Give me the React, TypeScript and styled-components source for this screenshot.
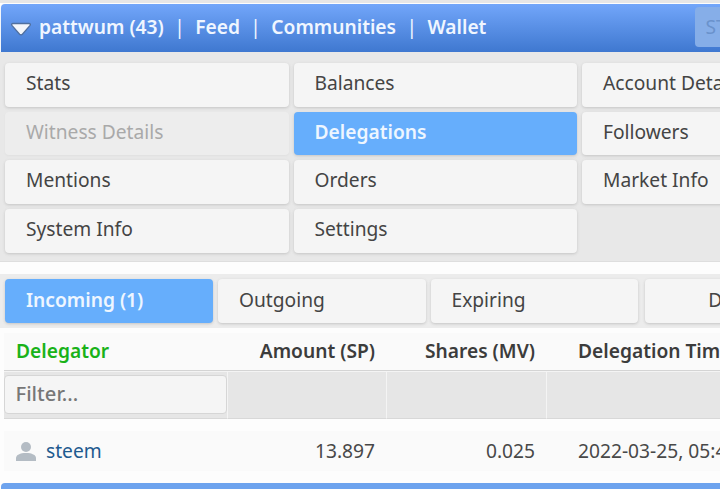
import React from "react";
import styled, { createGlobalStyle } from "styled-components";

const Global = createGlobalStyle`
  html, body { margin: 0; padding: 0; background: #fdfdfd; overflow: hidden; }
  body { font-family: "Noto Sans", "Open Sans", sans-serif; font-size: 19.2px; width: 720px; height: 489px; }
  #root { width: 720px; height: 489px; overflow: hidden; }
`;

const Page = styled.div`
  width: 720px;
  height: 489px;
  overflow: hidden;
  padding-top: 4px;
  box-sizing: border-box;
  background: linear-gradient(#e6e6e6, #e6e6e6) no-repeat 0 0 / 100% 3px, #fdfdfd;
`;

const Header = styled.header`
  height: 48px;
  margin-left: 1px;
  width: 760px;
  border-radius: 4px 4px 0 0;
  background: linear-gradient(#72a6fa, #3f78d0);
  display: flex;
  align-items: center;
  box-sizing: border-box;
  padding: 0 0 3px 9px;
  color: #f0f6ff;
  font-weight: 600;
  font-size: 19.2px;
  white-space: nowrap;
  box-shadow: 0 1px 1px #9db8de;
`;

const Caret = styled.svg`
  width: 22px;
  height: 16px;
  margin: 4px 7px 0 0;
  flex: none;
`;

const Sep = styled.span`
  font-weight: 400;
  margin: 0 10.4px;
`;

const SearchBox = styled.div`
  margin-left: 209px;
  width: 80px;
  height: 40px;
  border-radius: 4px;
  background: #86aee8;
  color: #6a92cc;
  font-weight: 400;
  font-size: 19.2px;
  padding-left: 10px;
  box-sizing: border-box;
  line-height: 40px;
`;

const MenuPanel = styled.nav`
  width: 880px;
  background: #e8e8e8;
  padding: 11px 5px 8px;
  display: grid;
  grid-template-columns: repeat(3, 283.5px);
  grid-auto-rows: 43.7px;
  column-gap: 5px;
  row-gap: 5px;
  box-sizing: border-box;
  border-bottom: 1px solid #dedede;
`;

const Btn = styled.div<{ $active?: boolean; $disabled?: boolean; $center?: boolean }>`
  border-radius: 4px;
  display: flex;
  align-items: center;
  justify-content: ${(p) => (p.$center ? "center" : "flex-start")};
  padding: 0 0 5px 21px;
  box-sizing: border-box;
  white-space: nowrap;
  font-size: 19.2px;
  font-weight: ${(p) => (p.$active ? 600 : 400)};
  color: ${(p) => (p.$active ? "#eef6ff" : p.$disabled ? "#a9a9a9" : "#444")};
  background: ${(p) => (p.$active ? "#66aefc" : p.$disabled ? "#ededed" : "#f5f5f5")};
  box-shadow: ${(p) => (p.$disabled ? "0 1px 2px #e0e0e0" : "0 1px 3px #c4c4c4")};
`;

const Tab = styled(Btn)`
  padding-bottom: 3px;
  &:last-child { margin: 0 2px; }
`;

const TabsPanel = styled.div`
  margin-top: 12px;
  width: 880px;
  background: #ececec;
  padding: 5px;
  display: grid;
  grid-template-columns: 208px 207.5px 207.5px 208px;
  grid-auto-rows: 44px;
  column-gap: 5px;
  box-sizing: border-box;
`;

const Table = styled.table`
  margin: 5px 0 0 4px;
  width: 880px;
  table-layout: fixed;
  border-collapse: separate;
  border-spacing: 0;
  font-size: 19.2px;
  color: #444;
`;

const Th = styled.th<{ $sorted?: boolean; $left?: boolean; $indent?: boolean }>`
  height: 38px;
  padding: 0 12px 1px ${(p) => (p.$indent ? "31px" : "12px")};
  box-sizing: border-box;
  font-weight: 600;
  font-size: 19.2px;
  white-space: nowrap;
  overflow: hidden;
  text-align: ${(p) => (p.$left ? "left" : "right")};
  color: ${(p) => (p.$sorted ? "#19b219" : "#3c3c3c")};
  background: #fafafa;
  border-bottom: 1px solid #d4d4d4;
`;

const FilterCell = styled.td`
  height: 48px;
  padding: 3px 0 4px 0;
  box-sizing: border-box;
  background: #e6e6e6;
  border-top: 1px solid #f4f4f4;
  border-right: 1px solid #f4f4f4;
  border-bottom: 1px solid #d8d8d8;
`;

const FilterInput = styled.input`
  display: block;
  width: 100%;
  height: 39px;
  box-sizing: border-box;
  border: 1px solid #d6d6d6;
  border-radius: 4px;
  background: #f5f5f5;
  padding: 0 11px 2px 10.5px;
  font: 500 20.2px "Noto Sans", sans-serif;
  color: #777;
  &::placeholder { color: #777; opacity: 1; }
`;

const Spacer = styled.td`
  height: 12px;
  padding: 0;
`;

const Td = styled.td<{ $left?: boolean; $indent?: boolean }>`
  height: 40px;
  padding: 0 12px 0 ${(p) => (p.$indent ? "31px" : "12px")};
  background: #fafafa;
  white-space: nowrap;
  overflow: hidden;
  text-align: ${(p) => (p.$left ? "left" : "right")};
  color: #484848;
`;

const UserCell = styled.div`
  display: flex;
  align-items: center;
  gap: 10px;
`;

const UserLink = styled.a`
  color: #1f5a8f;
`;

const BottomBar = styled.div`
  margin-top: 12px;
  height: 6px;
  width: 760px;
  margin-left: 1px;
  border-radius: 4px 4px 0 0;
  background: #6da3ee;
`;

export default function App() {
  return (
    <Page>
      <Global />
      <Header>
        <Caret viewBox="0 0 22 16">
          <path d="M3 2.5h16c1.2 0 1.8 1 1.1 1.9L12.4 13.2c-.7.8-2 .8-2.8 0L1.9 4.4C1.2 3.5 1.8 2.5 3 2.5z" fill="#f3f6fb" stroke="#4f6f9f" strokeWidth="1.3" />
        </Caret>
        <span>pattwum (43)</span>
        <Sep>|</Sep>
        <span>Feed</span>
        <Sep>|</Sep>
        <span>Communities</span>
        <Sep>|</Sep>
        <span>Wallet</span>
        <SearchBox>ST</SearchBox>
      </Header>
      <MenuPanel>
        <Btn>Stats</Btn>
        <Btn>Balances</Btn>
        <Btn>Account Details</Btn>
        <Btn $disabled>Witness Details</Btn>
        <Btn $active>Delegations</Btn>
        <Btn>Followers</Btn>
        <Btn>Mentions</Btn>
        <Btn>Orders</Btn>
        <Btn>Market Info</Btn>
        <Btn>System Info</Btn>
        <Btn>Settings</Btn>
      </MenuPanel>
      <TabsPanel>
        <Tab $active>Incoming (1)</Tab>
        <Tab>Outgoing</Tab>
        <Tab>Expiring</Tab>
        <Tab $center>Delegation</Tab>
      </TabsPanel>
      <Table>
        <colgroup>
          <col style={{ width: 224 }} />
          <col style={{ width: 159 }} />
          <col style={{ width: 160 }} />
          <col style={{ width: 337 }} />
        </colgroup>
        <thead>
          <tr>
            <Th $sorted $left>Delegator</Th>
            <Th>Amount (SP)</Th>
            <Th>Shares (MV)</Th>
            <Th $left $indent>Delegation Time</Th>
          </tr>
          <tr>
            <FilterCell><FilterInput placeholder="Filter..." readOnly /></FilterCell>
            <FilterCell />
            <FilterCell />
            <FilterCell />
          </tr>
        </thead>
        <tbody>
          <tr><Spacer colSpan={4} /></tr>
          <tr>
            <Td $left>
              <UserCell>
                <svg width="20" height="20" viewBox="0 0 20 20">
                  <circle cx="10" cy="6" r="5" fill="#b4bcc4" />
                  <path d="M0 20v-3c0-3 4-5 10-5s10 2 10 5v3z" fill="#b4bcc4" />
                </svg>
                <UserLink>steem</UserLink>
              </UserCell>
            </Td>
            <Td>13.897</Td>
            <Td>0.025</Td>
            <Td $left $indent>2022-03-25, 05:41:27</Td>
          </tr>
        </tbody>
      </Table>
      <BottomBar />
    </Page>
  );
}
